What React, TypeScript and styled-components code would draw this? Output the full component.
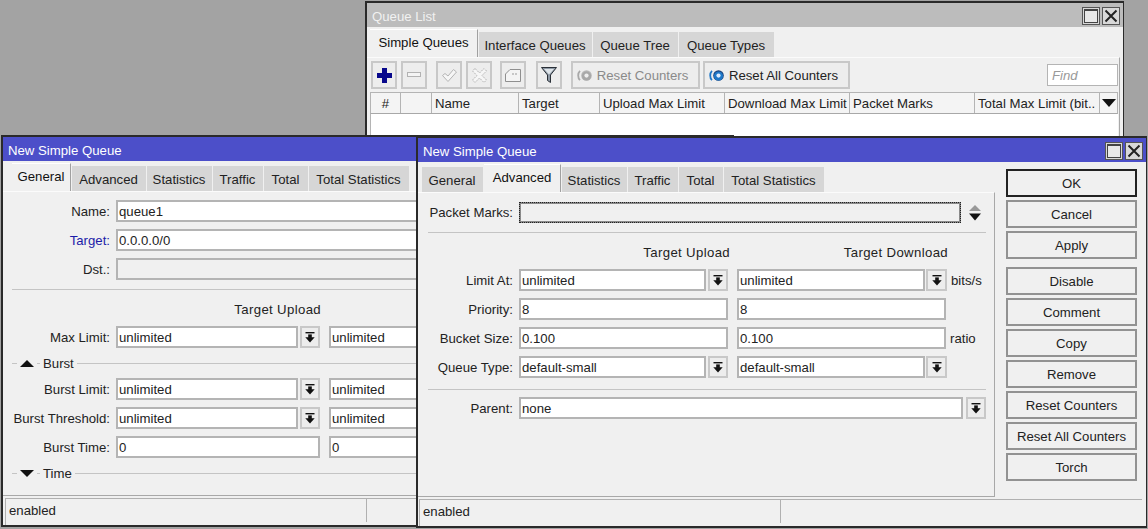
import React from "react";
import styled, { createGlobalStyle } from "styled-components";

const Global = createGlobalStyle`
  html, body { margin: 0; padding: 0; height: 100%; background: #a3a3a3; overflow: hidden; }
  body { font-family: "Liberation Sans", Arial, sans-serif; font-size: 13.2px; color: #222; }
  * { box-sizing: border-box; }
`;

const Desktop = styled.div`
  position: relative;
  width: 1148px;
  height: 529px;
  overflow: hidden;
  background: #a3a3a3;
`;

const Win = styled.section<{ $x: number; $y: number; $w: number; $h: number }>`
  position: absolute;
  left: ${p => p.$x}px;
  top: ${p => p.$y}px;
  width: ${p => p.$w}px;
  height: ${p => p.$h}px;
  display: flex;
  flex-direction: column;
  background: #f0f0f0;
  border: 2px solid #2a2a2a;
  border-right-width: 1px;
`;

const TitleBar = styled.header<{ $active?: boolean }>`
  flex: none;
  height: 24px;
  padding: 2px 3px 0 5px;
  display: flex;
  align-items: center;
  justify-content: space-between;
  background: ${p => (p.$active ? "#4c4fc9" : "#bcbcbc")};
  color: ${p => (p.$active ? "#fff" : "#f1f1f1")};
`;

const WinButtons = styled.div`
  display: flex;
  gap: 2px;
`;

const WinBtn = styled.span`
  width: 18px;
  height: 18px;
  display: flex;
  align-items: center;
  justify-content: center;
  border: 1px solid #555;
  background: #d8d8d8;
`;

const TabRow = styled.nav<{ $pad: number }>`
  flex: none;
  display: flex;
  align-items: flex-end;
  gap: 1px;
  padding-left: ${p => p.$pad}px;
  padding-top: 2px;
`;

const Tab = styled.span<{ $w: number; $active?: boolean }>`
  width: ${p => p.$w}px;
  height: ${p => (p.$active ? 28 : 25)}px;
  display: flex;
  align-items: center;
  justify-content: center;
  white-space: nowrap;
  color: ${p => (p.$active ? "#111" : "#222")};
  background: ${p => (p.$active ? "#f0f0f0" : "#d6d6d6")};
  border-right: 1px solid ${p => (p.$active ? "#a0a0a0" : "#d6d6d6")};
  border-top: 1px solid ${p => (p.$active ? "#fff" : "#d6d6d6")};
  padding-bottom: ${p => (p.$active ? 3 : 0)}px;
`;

const Panel = styled.div`
  flex: 1;
  min-height: 0;
  border-top: 1px solid #fbfbfb;
  position: relative;
`;

const ListPanel = styled(Panel)`
  margin-right: 3px;
  padding: 3px 0 0 3px;
  border-right: 1px solid #a8a8a8;
  display: flex;
  flex-direction: column;
`;

const Toolbar = styled.div`
  display: flex;
  height: 28px;
  align-items: stretch;
  padding-left: 1px;
  margin-right: 1px;
`;

const ToolBtn = styled.span<{ $w: number; $mr: number; $off?: boolean; $pr?: number }>`
  width: ${p => p.$w}px;
  margin-right: ${p => p.$mr}px;
  padding-right: ${p => p.$pr ?? 0}px;
  display: flex;
  align-items: center;
  justify-content: center;
  gap: 5px;
  flex: none;
  background: #ededed;
  border: 2px solid #c8c8c8;
  color: ${p => (p.$off ? "#8a8a8a" : "#222")};
  white-space: nowrap;
`;

const FindBox = styled.span`
  margin: 3px 0 3px auto;
  width: 71px;
  padding-left: 4px;
  display: flex;
  align-items: center;
  background: #fff;
  border: 1px solid #b4b4b4;
  color: #9a9a9a;
  font-style: italic;
`;

const TableHead = styled.div`
  margin-top: 3px;
  margin-right: 1px;
  display: flex;
  height: 22px;
  border: 1px solid #b4b4b4;
  border-bottom-color: #a8a8a8;
  background: #f4f4f4;
`;

const HeadCell = styled.span<{ $w: number; $center?: boolean }>`
  flex: none;
  width: ${p => p.$w}px;
  height: 100%;
  padding-left: ${p => (p.$center ? 0 : 3)}px;
  display: flex;
  align-items: center;
  justify-content: ${p => (p.$center ? "center" : "flex-start")};
  border-right: 1px solid #b4b4b4;
  white-space: nowrap;
  overflow: hidden;
  &:last-child { border-right: 0; }
`;

const TableBody = styled.div`
  flex: 1;
  background: #fff;
  margin-right: 1px;
  border-left: 1px solid #b4b4b4;
`;

const Split = styled.div`
  flex: 1;
  min-height: 0;
  display: flex;
`;

const MainCol = styled.div`
  flex: 1;
  min-width: 0;
  display: flex;
  flex-direction: column;
`;

const FormPanel = styled(Panel)<{ $pl: number; $pr: number; $pt: number; $divider?: boolean }>`
  padding: ${p => p.$pt}px ${p => p.$pr}px 0 ${p => p.$pl}px;
  border-right: ${p => (p.$divider ? "1px solid #a8a8a8" : "0")};
  border-bottom: 1px solid #a8a8a8;
`;

const Row = styled.div<{ $cols: string; $mt?: number; $h?: number }>`
  display: grid;
  grid-template-columns: ${p => p.$cols};
  margin-top: ${p => p.$mt ?? 7}px;
  align-items: center;
  height: ${p => p.$h ?? 22}px;
  &:first-child { margin-top: 0; }
`;

const Label = styled.label<{ $link?: boolean }>`
  text-align: right;
  padding-right: 6px;
  white-space: nowrap;
  color: ${p => (p.$link ? "#1c1ca8" : "#222")};
`;

const Field = styled.span<{ $off?: boolean; $focus?: boolean; $span?: number; $h?: number }>`
  height: ${p => p.$h ?? 22}px;
  min-width: 0;
  padding-left: 1px;
  display: flex;
  align-items: center;
  white-space: nowrap;
  overflow: hidden;
  grid-column: ${p => (p.$span ? `span ${p.$span}` : "auto")};
  background: ${p => (p.$off || p.$focus ? "#f0f0f0" : "#fff")};
  border: 2px solid ${p => (p.$focus ? "#8a8a8a" : "#b4b4b4")};
  outline: ${p => (p.$focus ? "1px dotted #222" : "none")};
  outline-offset: -1px;
`;

const DropBtn = styled.span`
  height: 22px;
  display: flex;
  align-items: center;
  justify-content: center;
  background: #ededed;
  border: 2px solid #c8c8c8;
`;

const SpinnerCell = styled.span`
  display: flex;
  justify-content: flex-end;
  padding-right: 5px;
  align-items: center;
`;

const Unit = styled.span`
  padding-left: 4px;
  white-space: nowrap;
`;

const HeadRow = styled.div<{ $cols: string }>`
  display: grid;
  grid-template-columns: ${p => p.$cols};
  margin-top: 10px;
  height: 18px;
  align-items: center;
  text-align: right;
  white-space: nowrap;
  letter-spacing: 0.35px;
`;

const Sep = styled.hr<{ $mt: number; $mb: number }>`
  margin: ${p => p.$mt}px 0 ${p => p.$mb}px;
  height: 1px;
  border: 0;
  background: #c4c4c4;
`;

const Fold = styled.div`
  display: flex;
  align-items: center;
  gap: 3px;
  height: 18px;
  margin-top: 6px;
`;

const FoldLine = styled.span<{ $w?: number }>`
  height: 1px;
  background: #c4c4c4;
  flex: ${p => (p.$w ? "none" : "1")};
  width: ${p => (p.$w ? `${p.$w}px` : "auto")};
`;

const StatusBar = styled.footer<{ $ml: number }>`
  flex: none;
  height: 27px;
  margin: 2px 4px 0 ${p => p.$ml}px;
  padding-left: 3px;
  display: grid;
  grid-template-columns: 357px 1fr;
  align-items: start;
  border-top: 1px solid #b0b0b0;
  border-left: 1px solid #b0b0b0;
`;

const StatusCell = styled.span`
  height: 23px;
  display: flex;
  align-items: center;
`;

const StatusGap = styled(StatusCell)`
  border-left: 1px solid #b0b0b0;
`;

const SideCol = styled.aside`
  flex: none;
  width: 151px;
  padding: 7px 9px 0 11px;
  display: flex;
  flex-direction: column;
  gap: 3px;
`;

const ActionBtn = styled.span<{ $default?: boolean; $mt?: number }>`
  height: 28px;
  flex: none;
  margin-top: ${p => p.$mt ?? 0}px;
  display: flex;
  align-items: center;
  justify-content: center;
  white-space: nowrap;
  background: #f0f0f0;
  border: 2px solid ${p => (p.$default ? "#222" : "#929292")};
`;

const MaxIcon = () => (
  <svg width="14" height="14" viewBox="0 0 14 14"><rect x="0.5" y="0.5" width="13" height="13" fill="#e8e8e8" stroke="#444" /><rect x="0" y="0" width="14" height="2" fill="#444" /></svg>
);
const CloseIcon = () => (
  <svg width="14" height="14" viewBox="0 0 14 14"><path d="M1.5 1.5 12.5 12.5M12.5 1.5 1.5 12.5" stroke="#222" strokeWidth="2" /></svg>
);
const DownBar = () => (
  <svg width="10" height="11" viewBox="0 0 10 11"><rect x="0.5" y="0" width="9" height="1.4" fill="#111" /><rect x="3.2" y="2.4" width="3.6" height="3.5" fill="#111" /><polygon points="0.3,5.2 9.7,5.2 5,10.4" fill="#111" /></svg>
);
const Plus = () => (
  <svg width="15" height="15" viewBox="0 0 15 15"><path d="M5 0h5v5h5v5h-5v5H5v-5H0V5h5z" fill="#08088c" /></svg>
);
const Minus = () => (
  <svg width="14" height="6" viewBox="0 0 14 6"><rect x="0.5" y="0.5" width="13" height="4" fill="#f4f4f4" stroke="#b2b2b2" /></svg>
);
const Check = () => (
  <svg width="15" height="13" viewBox="0 0 15 13"><path d="M0.5 6.5 3 4.5 6 7 11.5 0.5 14.5 3 6 12.5z" fill="#f6f6f6" stroke="#b4b4b4" /></svg>
);
const Cross = () => (
  <svg width="15" height="15" viewBox="0 0 15 15"><path d="M3 0.5 7.5 5 12 0.5 14.5 3 10 7.5 14.5 12 12 14.5 7.5 10 3 14.5 0.5 12 5 7.5 0.5 3z" fill="#f6f6f6" stroke="#b4b4b4" strokeDasharray="2 1" /></svg>
);
const Note = () => (
  <svg width="16" height="13" viewBox="0 0 16 13"><path d="M0.5 5 5 0.5H15.5V12.5H0.5z" fill="#f4f4f4" stroke="#8f8f8f" /><path d="M7 5h2M10 5h2" stroke="#9a9a9a" /></svg>
);
const Funnel = () => (
  <svg width="16" height="16" viewBox="0 0 16 16"><path d="M0.5 0.5H15.5L9.5 8V15.5L6.5 13.5V8z" fill="#8f9aa6" stroke="#2a3038" /><path d="M3 2H13L8 7.5z" fill="#dfe5ea" /></svg>
);
const Reset = ({ off }: { off?: boolean }) => {
  const main = off ? "#a8a8a8" : "#1f78c8";
  return (
    <svg width="15" height="11" viewBox="0 0 15 11">
      <path d="M3 0.8C0.6 3 0.6 8 3 10.2" fill="none" stroke={main} strokeWidth="1.8" />
      <circle cx="9.5" cy="5.5" r="5.3" fill={off ? "#b8b8b8" : "#1a3f78"} />
      <circle cx="9.5" cy="6" r="4.6" fill={main} />
      <circle cx="9.5" cy="5.6" r="2.1" fill={off ? "#eeeeee" : "#dcecff"} />
    </svg>
  );
};
const Caret = () => (
  <svg width="14" height="8" viewBox="0 0 14 8"><polygon points="0,0 14,0 7,8" fill="#111" /></svg>
);
const FoldUp = () => (
  <svg width="14" height="7" viewBox="0 0 14 7"><polygon points="0,7 14,7 7,0" fill="#111" /></svg>
);
const FoldDown = () => (
  <svg width="14" height="7" viewBox="0 0 14 7"><polygon points="0,0 14,0 7,7" fill="#111" /></svg>
);
const Spinner = () => (
  <svg width="12" height="16" viewBox="0 0 12 16"><polygon points="0,6 12,6 6,0" fill="#999" /><polygon points="0,8.5 12,8.5 6,15.5" fill="#111" /></svg>
);

const Controls = () => (
  <WinButtons>
    <WinBtn><MaxIcon /></WinBtn>
    <WinBtn><CloseIcon /></WinBtn>
  </WinButtons>
);

const GENERAL_TABS: [string, number][] = [["General", 59], ["Advanced", 74], ["Statistics", 65], ["Traffic", 50], ["Total", 44], ["Total Statistics", 100]];
const ADV_TABS: [string, number][] = [["General", 61], ["Advanced", 77], ["Statistics", 65], ["Traffic", 50], ["Total", 44], ["Total Statistics", 100]];
const QUEUE_TABS: [string, number][] = [["Simple Queues", 108], ["Interface Queues", 113], ["Queue Tree", 85], ["Queue Types", 95]];
const HEADS: [string, number, boolean][] = [["#", 30, true], ["", 31, true], ["Name", 87, false], ["Target", 81, false], ["Upload Max Limit", 125, false], ["Download Max Limit", 125, false], ["Packet Marks", 125, false], ["Total Max Limit (bit..", 125, false]];

const G_COLS = "104px 182px 2px 20px 9px 182px 2px 20px";
const A_COLS = "91px 187px 2px 20px 9px 188px 1px 21px 60px";

const Rates = ({ label, v, mt }: { label: string; v: string; mt?: number }) => (
  <Row $cols={G_COLS} $mt={mt}>
    <Label>{label}</Label>
    <Field>{v}</Field><i /><DropBtn><DownBar /></DropBtn><i />
    <Field>{v}</Field><i /><DropBtn><DownBar /></DropBtn>
  </Row>
);

const Wide = ({ label, v, unit }: { label: string; v: string; unit?: string }) => (
  <Row $cols="91px 209px 9px 209px 60px">
    <Label>{label}</Label>
    <Field>{v}</Field><i />
    <Field>{v}</Field>
    {unit ? <Unit>{unit}</Unit> : <i />}
  </Row>
);

const Drop = ({ label, v, unit, mt }: { label: string; v: string; unit?: string; mt?: number }) => (
  <Row $cols={A_COLS} $mt={mt}>
    <Label>{label}</Label>
    <Field>{v}</Field><i /><DropBtn><DownBar /></DropBtn><i />
    <Field>{v}</Field><i /><DropBtn><DownBar /></DropBtn>
    {unit ? <Unit>{unit}</Unit> : <i />}
  </Row>
);

export default function App() {
  return (
    <Desktop>
      <Global />
      <Win $x={365} $y={1} $w={759} $h={300}>
        <TitleBar>
          <span>Queue List</span>
          <Controls />
        </TitleBar>
        <TabRow $pad={3}>
          {QUEUE_TABS.map(([t, w], i) => <Tab key={t} $w={w} $active={i === 0}>{t}</Tab>)}
        </TabRow>
        <ListPanel>
          <Toolbar>
            <ToolBtn $w={26} $mr={4}><Plus /></ToolBtn>
            <ToolBtn $w={26} $mr={9}><Minus /></ToolBtn>
            <ToolBtn $w={26} $mr={4}><Check /></ToolBtn>
            <ToolBtn $w={26} $mr={8}><Cross /></ToolBtn>
            <ToolBtn $w={26} $mr={10}><Note /></ToolBtn>
            <ToolBtn $w={26} $mr={9}><Funnel /></ToolBtn>
            <ToolBtn $w={129} $mr={3} $pr={6} $off><Reset off />Reset Counters</ToolBtn>
            <ToolBtn $w={147} $mr={0} $pr={6}><Reset />Reset All Counters</ToolBtn>
            <FindBox>Find</FindBox>
          </Toolbar>
          <TableHead>
            {HEADS.map(([h, w, c], i) => <HeadCell key={i} $w={w} $center={c}>{h}</HeadCell>)}
            <HeadCell $w={18} $center><Caret /></HeadCell>
          </TableHead>
          <TableBody />
        </ListPanel>
      </Win>

      <Win $x={1} $y={135} $w={733} $h={392}>
        <TitleBar $active>
          <span>New Simple Queue</span>
        </TitleBar>
        <TabRow $pad={9}>
          {GENERAL_TABS.map(([t, w], i) => <Tab key={t} $w={w} $active={i === 0}>{t}</Tab>)}
        </TabRow>
        <FormPanel $pl={9} $pr={0} $pt={8}>
          <Row $cols="104px 1fr"><Label>Name:</Label><Field>queue1</Field></Row>
          <Row $cols="104px 1fr"><Label $link>Target:</Label><Field>0.0.0.0/0</Field></Row>
          <Row $cols="104px 1fr"><Label>Dst.:</Label><Field $off /></Row>
          <Sep $mt={9} $mb={0} />
          <HeadRow $cols="104px 205px"><i />Target Upload</HeadRow>
          <Rates label="Max Limit:" v="unlimited" mt={8} />
          <Fold>
            <FoldLine $w={5} /><FoldUp /><FoldLine $w={3} />Burst<FoldLine />
          </Fold>
          <Rates label="Burst Limit:" v="unlimited" mt={6} />
          <Rates label="Burst Threshold:" v="unlimited" />
          <Row $cols={G_COLS}>
            <Label>Burst Time:</Label>
            <Field $span={3}>0</Field><i />
            <Field $span={3}>0</Field>
          </Row>
          <Fold>
            <FoldLine $w={5} /><FoldDown /><FoldLine $w={3} />Time<FoldLine />
          </Fold>
        </FormPanel>
        <StatusBar $ml={2}>
          <StatusCell>enabled</StatusCell>
          <StatusGap />
        </StatusBar>
      </Win>

      <Win $x={416} $y={136} $w={731} $h={392}>
        <TitleBar $active>
          <span>New Simple Queue</span>
          <Controls />
        </TitleBar>
        <Split>
          <MainCol>
            <TabRow $pad={4}>
              {ADV_TABS.map(([t, w], i) => <Tab key={t} $w={w} $active={i === 1}>{t}</Tab>)}
            </TabRow>
            <FormPanel $pl={10} $pr={8} $pt={9} $divider>
              <Row $cols="91px 442px 1fr" $h={21}>
                <Label>Packet Marks:</Label>
                <Field $focus $h={21} />
                <SpinnerCell><Spinner /></SpinnerCell>
              </Row>
              <Sep $mt={9} $mb={0} />
              <HeadRow $cols="91px 211px 9px 209px"><i /><span>Target Upload</span><i /><span>Target Download</span></HeadRow>
              <Drop label="Limit At:" v="unlimited" unit="bits/s" mt={8} />
              <Wide label="Priority:" v="8" />
              <Wide label="Bucket Size:" v="0.100" unit="ratio" />
              <Drop label="Queue Type:" v="default-small" />
              <Sep $mt={11} $mb={7} />
              <Row $cols="91px 444px 3px 20px">
                <Label>Parent:</Label>
                <Field>none</Field><i /><DropBtn><DownBar /></DropBtn>
              </Row>
            </FormPanel>
          </MainCol>
          <SideCol>
            <ActionBtn $default>OK</ActionBtn>
            <ActionBtn>Cancel</ActionBtn>
            <ActionBtn>Apply</ActionBtn>
            <ActionBtn $mt={5}>Disable</ActionBtn>
            <ActionBtn>Comment</ActionBtn>
            <ActionBtn>Copy</ActionBtn>
            <ActionBtn>Remove</ActionBtn>
            <ActionBtn>Reset Counters</ActionBtn>
            <ActionBtn>Reset All Counters</ActionBtn>
            <ActionBtn>Torch</ActionBtn>
          </SideCol>
        </Split>
        <StatusBar $ml={1}>
          <StatusCell>enabled</StatusCell>
          <StatusGap />
        </StatusBar>
      </Win>
    </Desktop>
  );
}
